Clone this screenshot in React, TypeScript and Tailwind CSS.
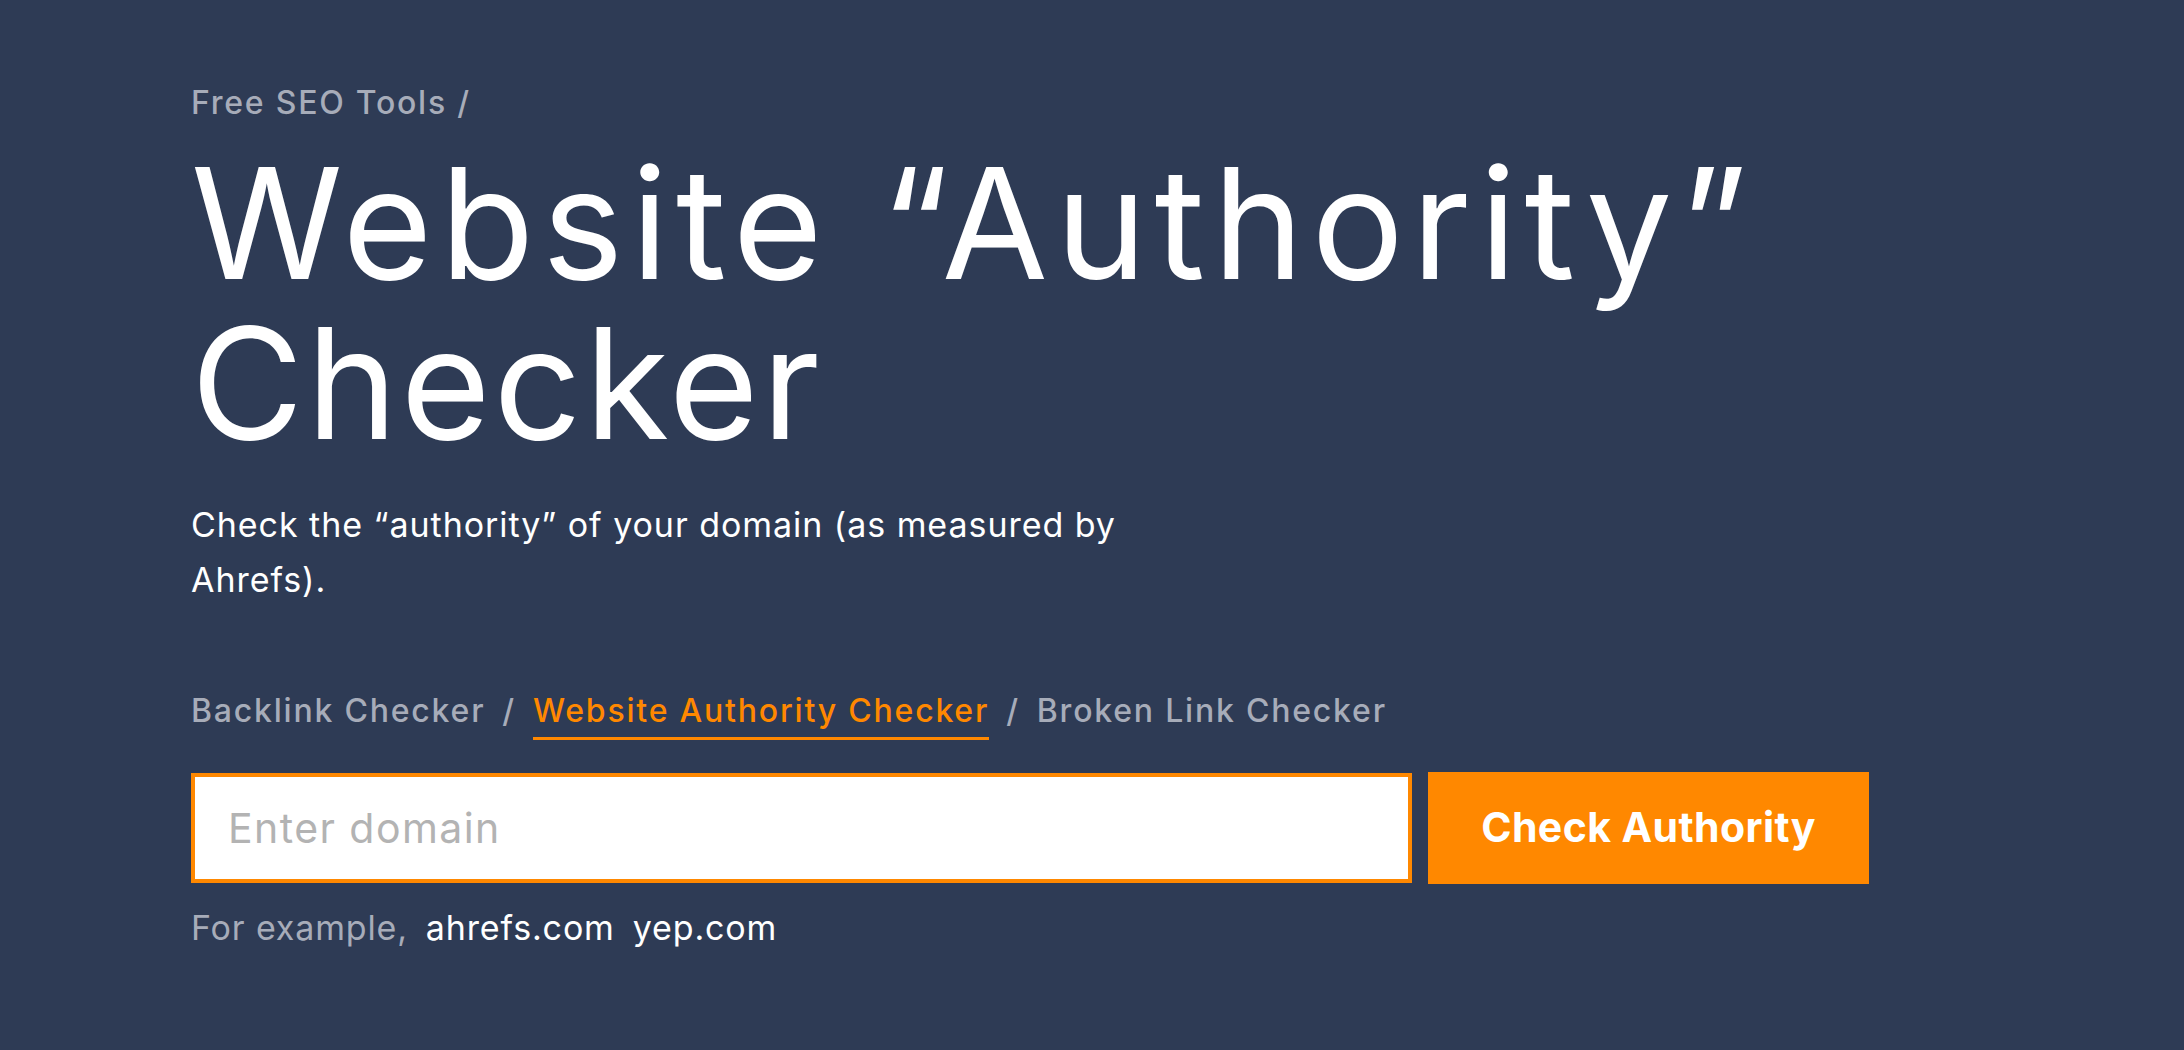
import { useState } from "react";

const tabs = [
  { label: "Backlink Checker", active: false },
  { label: "Website Authority Checker", active: true },
  { label: "Broken Link Checker", active: false },
];

export default function App() {
  const [domain, setDomain] = useState("");

  return (
    <div className="min-h-screen bg-[#2e3b55] pl-[191px] pt-[83px] font-['Inter',sans-serif]">
      <p className="text-[32px] leading-[40px] font-medium tracking-[0.055em] text-[#a7acb9]">
        Free SEO Tools /
      </p>

      <h1 className="mt-[20px] text-[154px] leading-[160px] text-white">
        <span className="block tracking-[0.05em]">Website “Authority”</span>
        <span className="block tracking-[0.02em]">Checker</span>
      </h1>

      <p className="mt-[34px] w-[990px] text-[34px] leading-[55px] tracking-[0.028em] text-white">
        Check the “authority” of your domain (as measured by Ahrefs).
      </p>

      <div className="mt-[84px] flex items-start gap-[17px] text-[32px] leading-[40px] font-medium tracking-[0.056em]">
        {tabs.map((tab, i) => (
          <div key={tab.label} className="flex items-start gap-[17px]">
            {i > 0 && <span className="text-[#a7acb9]">/</span>}
            <a
              href="#"
              className={
                tab.active
                  ? "block pb-[6px] border-b-[3px] border-[#ff8800] text-[#ff8800]"
                  : "block text-[#a7acb9]"
              }
            >
              {tab.label}
            </a>
          </div>
        ))}
      </div>

      <form
        className="mt-[32px] flex items-center gap-[16px]"
        onSubmit={(e) => e.preventDefault()}
      >
        <input
          type="text"
          placeholder="Enter domain"
          value={domain}
          onChange={(e) => setDomain(e.target.value)}
          className="w-[1221px] h-[110px] border-4 border-[#ff8800] bg-white pl-[33px] text-[41px] tracking-[0.035em] text-[#333] placeholder:text-[#b3b3b3] outline-none"
        />
        <button
          type="submit"
          className="w-[441px] h-[112px] bg-[#ff8800] text-white text-[41px] font-bold tracking-[0.01em]"
        >
          Check Authority
        </button>
      </form>

      <p className="mt-[22px] flex gap-[18px] text-[34px] leading-[44px] tracking-[0.025em]">
        <span className="text-[#a7acb9]">For example,</span>
        <a href="#" className="text-white">ahrefs.com</a>
        <a href="#" className="text-white">yep.com</a>
      </p>
    </div>
  );
}
